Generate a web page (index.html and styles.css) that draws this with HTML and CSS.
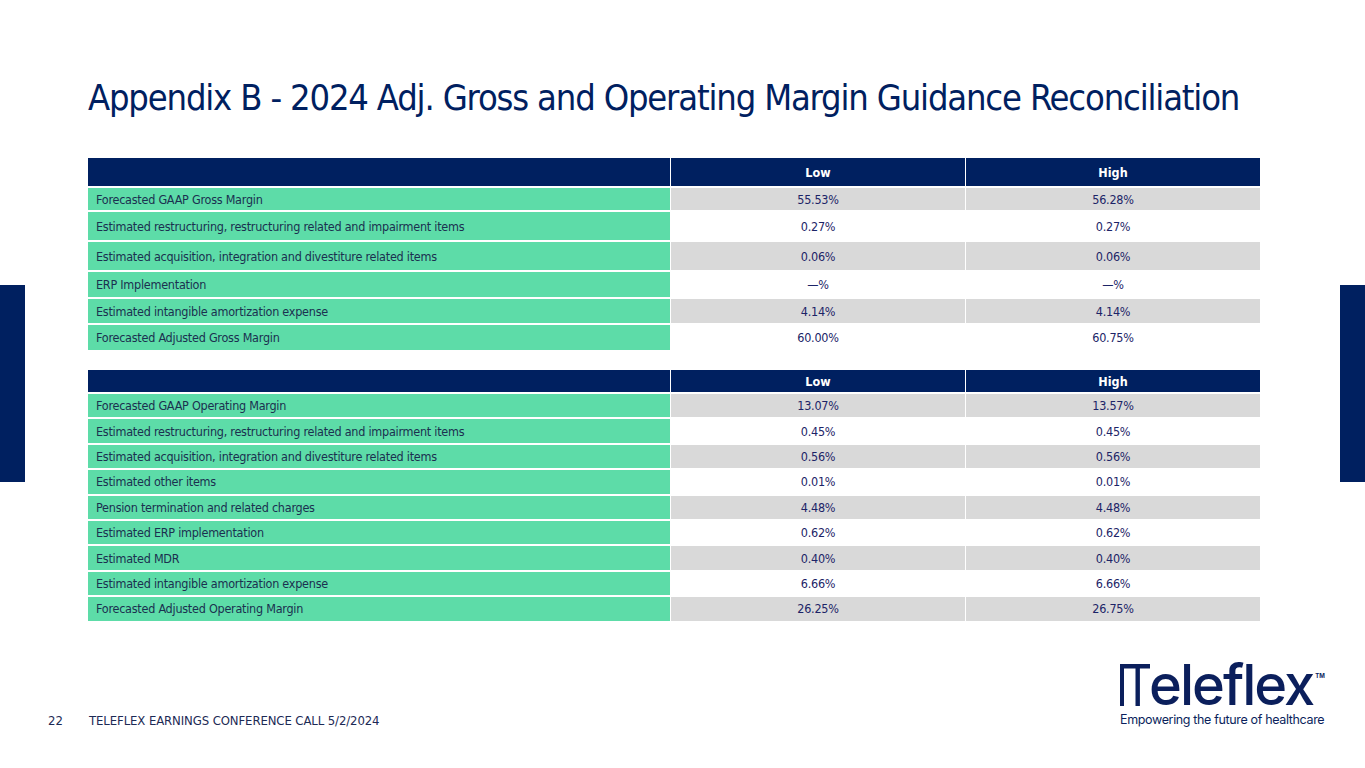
FILE: index.html
```html
<!DOCTYPE html>
<html>
<head>
<meta charset="utf-8">
<link rel="stylesheet" href="styles.css">
</head>
<body>
<div class="slide">
  <div class="sidebar left"></div>
  <div class="sidebar right"></div>
  <main class="content">
    <h1 class="title">Appendix B - 2024 Adj. Gross and Operating Margin Guidance Reconciliation</h1>

    <table class="recon t1">
      <tr class="head"><th class="lbl"></th><th>Low</th><th>High</th></tr>
      <tr class="r22 g"><td class="lbl">Forecasted GAAP Gross Margin</td><td>55.53%</td><td>56.28%</td></tr>
      <tr class="r28"><td class="lbl">Estimated restructuring, restructuring related and impairment items</td><td>0.27%</td><td>0.27%</td></tr>
      <tr class="r28 g"><td class="lbl">Estimated acquisition, integration and divestiture related items</td><td>0.06%</td><td>0.06%</td></tr>
      <tr class="r25"><td class="lbl">ERP Implementation</td><td>—%</td><td>—%</td></tr>
      <tr class="r24 g"><td class="lbl">Estimated intangible amortization expense</td><td>4.14%</td><td>4.14%</td></tr>
      <tr class="r25"><td class="lbl">Forecasted Adjusted Gross Margin</td><td>60.00%</td><td>60.75%</td></tr>
    </table>

    <table class="recon t2">
      <tr class="head"><th class="lbl"></th><th>Low</th><th>High</th></tr>
      <tr class="g"><td class="lbl">Forecasted GAAP Operating Margin</td><td>13.07%</td><td>13.57%</td></tr>
      <tr><td class="lbl">Estimated restructuring, restructuring related and impairment items</td><td>0.45%</td><td>0.45%</td></tr>
      <tr class="g"><td class="lbl">Estimated acquisition, integration and divestiture related items</td><td>0.56%</td><td>0.56%</td></tr>
      <tr><td class="lbl">Estimated other items</td><td>0.01%</td><td>0.01%</td></tr>
      <tr class="g"><td class="lbl">Pension termination and related charges</td><td>4.48%</td><td>4.48%</td></tr>
      <tr><td class="lbl">Estimated ERP implementation</td><td>0.62%</td><td>0.62%</td></tr>
      <tr class="g"><td class="lbl">Estimated MDR</td><td>0.40%</td><td>0.40%</td></tr>
      <tr><td class="lbl">Estimated intangible amortization expense</td><td>6.66%</td><td>6.66%</td></tr>
      <tr class="g"><td class="lbl">Forecasted Adjusted Operating Margin</td><td>26.25%</td><td>26.75%</td></tr>
    </table>
  </main>

  <footer class="footer">
    <span class="pageno">22</span>
    <span class="foottext">TELEFLEX EARNINGS CONFERENCE CALL 5/2/2024</span>
    <div class="logo">
      <div class="wordmark">
        <svg class="tmark" width="30" height="42" viewBox="0 0 30 42">
          <rect x="0" y="0" width="4" height="42" fill="#0b1f5c"/>
          <rect x="0" y="0" width="30" height="4.5" fill="#0b1f5c"/>
          <rect x="15.5" y="0" width="4.4" height="42" fill="#0b1f5c"/>
        </svg>
        <span class="word">eleflex</span>
        <span class="tm">TM</span>
      </div>
      <div class="tagline">Empowering the future of healthcare</div>
    </div>
  </footer>
</div>
</body>
</html>
```

FILE: styles.css
```css
html, body {
  margin: 0;
  padding: 0;
  background: #ffffff;
}

.slide {
  position: relative;
  width: 1365px;
  height: 768px;
  overflow: hidden;
  background: #ffffff;
  font-family: "DejaVu Sans Condensed", "DejaVu Sans", sans-serif;
  color: #14205a;
}

.sidebar {
  position: absolute;
  top: 285px;
  width: 25px;
  height: 197px;
  background: #002060;
}
.sidebar.left { left: 0; }
.sidebar.right { right: 0; }

.content {
  padding: 72px 0 0 88px;
  display: flex;
  flex-direction: column;
}

.title {
  margin: 0;
  font-weight: normal;
  font-size: 36px;
  line-height: 52px;
  color: #002060;
  letter-spacing: -1.17px;
  white-space: nowrap;
}

.recon {
  border-collapse: separate;
  border-spacing: 1px 2px;
  margin-left: -1px;
  table-layout: fixed;
  width: 1174px;
  font-size: 12.5px;
  letter-spacing: -0.25px;
}
.recon.t1 { margin-top: 32px; }
.recon.t2 { margin-top: 16px; }

.recon th, .recon td {
  padding: 0;
  text-align: center;
  vertical-align: middle;
  white-space: nowrap;
}

.recon th {
  background: #002060;
  color: #ffffff;
  font-weight: bold;
  height: 28px;
  width: 294px;
  letter-spacing: 0;
}
.recon th.lbl { width: 582px; }
.recon.t2 th { height: 22px; }

.recon td {
  background: #ffffff;
  color: #1c2467;
  height: 23.4px;
}
.recon tr.g td { background: #d9d9d9; }
.recon td.lbl,
.recon tr.g td.lbl {
  background: #5ddca8;
  color: #1b3050;
  text-align: left;
  padding-left: 8px;
}

.recon tr.r22 td { height: 22px; }
.recon tr.r24 td { height: 24px; }
.recon tr.r25 td { height: 25px; }
.recon tr.r28 td { height: 28px; }

.footer {
  position: absolute;
  left: 0;
  right: 0;
  bottom: 0;
  height: 110px;
}

.pageno {
  position: absolute;
  left: 48px;
  bottom: 40px;
  font-size: 13px;
  color: #1c2a55;
}

.foottext {
  position: absolute;
  left: 89px;
  bottom: 40px;
  font-size: 13px;
  letter-spacing: -0.1px;
  color: #1c2a55;
}

.logo {
  position: absolute;
  left: 1120px;
  bottom: 40px;
  display: flex;
  flex-direction: column;
  color: #0b1f5c;
}

.wordmark {
  display: flex;
  align-items: flex-end;
  height: 42px;
}
.tmark { display: block; flex: none; }
.word {
  font-family: "Inter", "Roboto", sans-serif;
  font-weight: 500;
  font-size: 56px;
  line-height: 42px;
  height: 42px;
  letter-spacing: -2px;
  margin-left: -1px;
}
.tm {
  font-family: "Inter", sans-serif;
  font-size: 6px;
  line-height: 8px;
  font-weight: 700;
  align-self: flex-start;
  margin-left: 2px;
  margin-top: 8px;
}
.tagline {
  margin-top: 6px;
  font-family: "Inter", "Roboto", sans-serif;
  font-size: 12.5px;
  line-height: 16px;
  letter-spacing: -0.35px;
  white-space: nowrap;
}
```
